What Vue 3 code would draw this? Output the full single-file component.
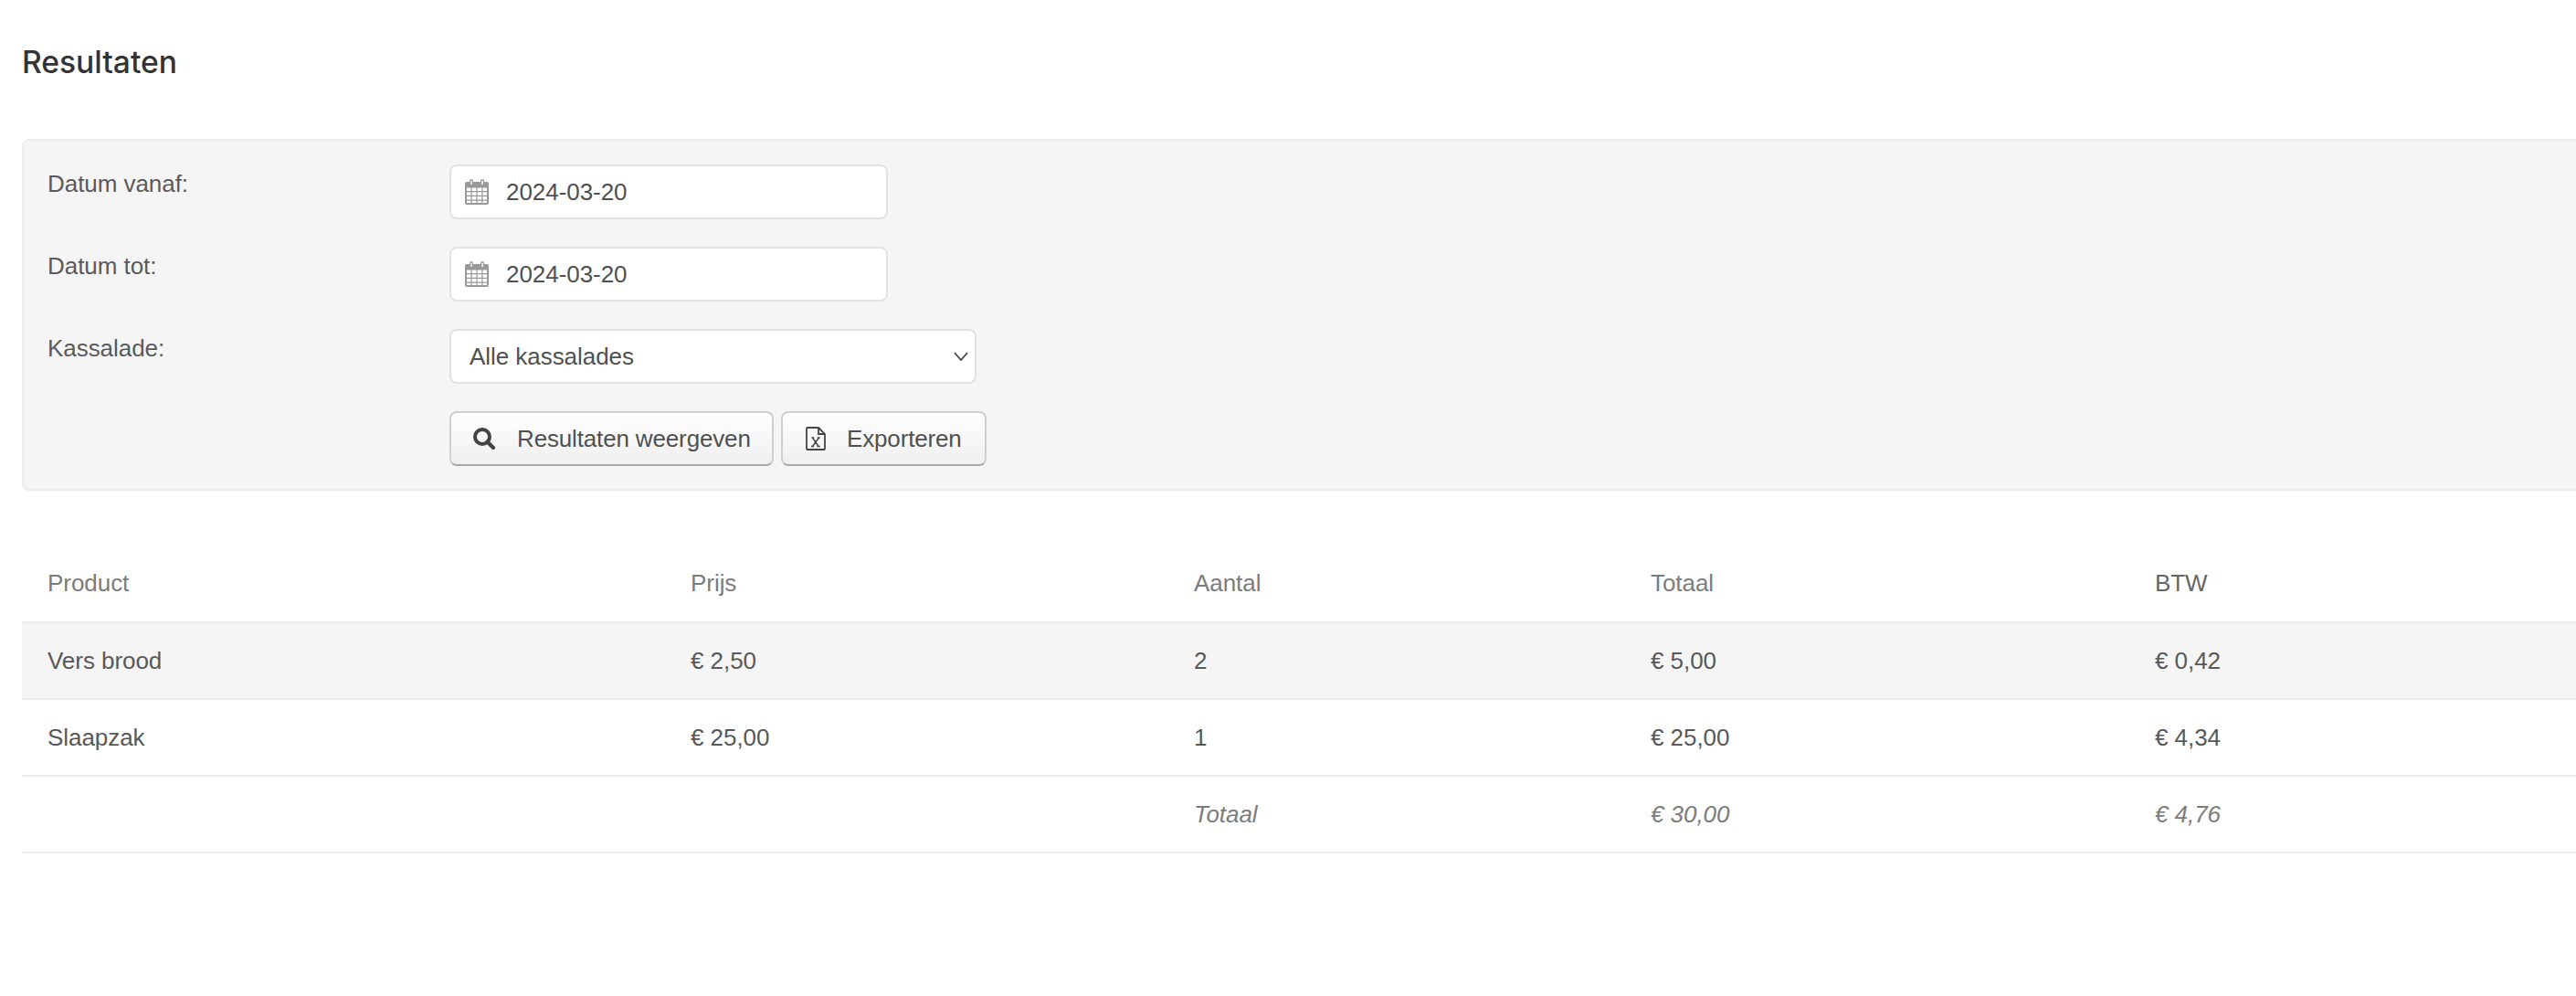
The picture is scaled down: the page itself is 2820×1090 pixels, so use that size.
<script setup>
const fields = [
  { id: 'from', label: 'Datum vanaf:', value: '2024-03-20' },
  { id: 'to', label: 'Datum tot:', value: '2024-03-20' },
]
const rows = [
  ['Vers brood', '€ 2,50', '2', '€ 5,00', '€ 0,42'],
  ['Slaapzak', '€ 25,00', '1', '€ 25,00', '€ 4,34'],
]
</script>

<template>
  <main class="page">
    <h1 class="title">Resultaten</h1>
    <form class="panel" @submit.prevent>
      <template v-for="f in fields" :key="f.id">
        <label class="label" :for="f.id">{{ f.label }}</label>
        <div class="date">
          <svg class="cal" viewBox="0 0 26 28">
            <path fill="#999" d="M2 3h3V2a2 2 0 0 1 4 0v1h8V2a2 2 0 0 1 4 0v1h3a2 2 0 0 1 2 2v21a2 2 0 0 1-2 2H2a2 2 0 0 1-2-2V5a2 2 0 0 1 2-2z"/>
            <path fill="#fff" d="M6.300 2.200a.7.7 0 0 1 1.400 0V6H6.300zM18.300 2.200a.7.7 0 0 1 1.400 0V6h-1.400z"/>
            <path fill="#fff" d="M2 9.500h4.500v3.500H2zM7.700 9.500h4.700v3.500H7.700zM13.600 9.500h4.700v3.500h-4.700zM19.500 9.500H24v3.500h-4.500zM2 14.300h4.500v3.500H2zM7.700 14.300h4.700v3.500H7.700zM13.600 14.300h4.700v3.500h-4.700zM19.500 14.300H24v3.500h-4.500zM2 19.100h4.500v3.500H2zM7.700 19.100h4.700v3.500H7.700zM13.600 19.100h4.700v3.500h-4.700zM19.500 19.100H24v3.500h-4.500zM2 23.800h4.500V26H2zM7.700 23.800h4.700V26H7.700zM13.600 23.800h4.700V26h-4.700zM19.500 23.800H24V26h-4.500z"/>
          </svg>
          <input :id="f.id" class="field date-input" type="text" :value="f.value" />
        </div>
      </template>

      <label class="label" for="drawer">Kassalade:</label>
      <div class="select-wrap">
        <select id="drawer" class="field select">
          <option>Alle kassalades</option>
        </select>
        <svg class="chev" viewBox="0 0 16 10"><path d="M1 1l7 8 7-8" fill="none" stroke="#444" stroke-width="1.800"/></svg>
      </div>

      <div class="actions">
        <button class="btn btn-search" type="button">
          <svg class="ico-search" viewBox="0 0 24 24">
            <circle cx="10" cy="10" r="8" fill="none" stroke="#444" stroke-width="4"/>
            <path d="M15.500 15.500L22 22" stroke="#444" stroke-width="4.200" stroke-linecap="round"/>
          </svg>
          <span class="btn-text">Resultaten weergeven</span>
        </button>
        <button class="btn btn-export" type="button">
          <svg class="ico-file" viewBox="0 0 22 26">
            <path d="M1 2a1 1 0 0 1 1-1h12l7 7v16a1 1 0 0 1-1 1H2a1 1 0 0 1-1-1z" fill="none" stroke="#444" stroke-width="1.800"/>
            <path d="M14 1v7h7" fill="none" stroke="#444" stroke-width="1.800"/>
            <path d="M6.500 12h2.800M12.800 12h2.800M7.500 12l6.500 9.500M14.500 12L7.500 21.500M6 21.500h3M12.500 21.500h3.300" fill="none" stroke="#444" stroke-width="1.400"/>
          </svg>
          <span class="btn-text">Exporteren</span>
        </button>
      </div>
    </form>

    <table class="table">
      <colgroup>
        <col class="c1" /><col class="c2" /><col class="c3" /><col class="c4" /><col />
      </colgroup>
      <thead>
        <tr>
          <th>Product</th><th>Prijs</th><th>Aantal</th><th>Totaal</th><th class="btw">BTW</th>
        </tr>
      </thead>
      <tbody>
        <tr v-for="(r, i) in rows" :key="i">
          <td v-for="(c, j) in r" :key="j">{{ c }}</td>
        </tr>
      </tbody>
      <tfoot>
        <tr>
          <td></td><td></td><td>Totaal</td><td>€ 30,00</td><td>€ 4,76</td>
        </tr>
      </tfoot>
    </table>
  </main>
</template>

<style>
html, body { margin: 0; background: #fff; }
</style>

<style scoped>
.page {
  width: 2820px;
  height: 1090px;
  box-sizing: border-box;
  padding: 0 0 0 24px;
  overflow: hidden;
  font-family: "Liberation Sans", Arial, sans-serif;
  font-size: 26px;
  letter-spacing: -0.05px;
  color: #585858;
}
.title {
  margin: 0;
  padding-top: 48px;
  height: 152px;
  box-sizing: border-box;
  font-family: Inter, "Liberation Sans", sans-serif;
  font-size: 33.600px;
  line-height: 40px;
  font-weight: 500;
  letter-spacing: 0;
  color: #333;
}
.panel {
  display: grid;
  grid-template-columns: 440px 1fr;
  grid-auto-rows: 60px;
  row-gap: 30px;
  height: 385px;
  box-sizing: border-box;
  padding: 26px 0 0 26px;
  background: #f5f5f5;
  border: 2px solid #ededed;
  border-right: 0;
  border-radius: 8px 0 0 8px;
}
.label { line-height: 42px; color: #5a5a5a; }
.date, .select-wrap { position: relative; }
.field {
  display: block;
  height: 60px;
  box-sizing: border-box;
  background: #fff;
  border: 2px solid #e2e2e2;
  border-radius: 8px;
  font: inherit;
  letter-spacing: inherit;
  color: #505050;
  outline: none;
}
.date-input { width: 480px; padding: 0 0 0 60px; }
.cal { position: absolute; left: 17px; top: 16px; width: 26px; height: 28px; }
.select { width: 577px; padding: 0 0 0 20px; appearance: none; }
.chev { position: absolute; left: 552px; top: 25px; width: 16px; height: 10px; }
.actions { grid-column: 2; display: flex; gap: 8px; }
.btn {
  display: flex;
  align-items: center;
  height: 60px;
  box-sizing: border-box;
  padding: 0;
  background: linear-gradient(#ffffff, #efefef);
  border: 2px solid #cfcfcf;
  border-bottom-color: #aaa;
  border-radius: 8px;
  font: inherit;
  color: #505050;
}
.btn-text { letter-spacing: -0.15px; }
.btn-search { width: 355px; padding-left: 24px; }
.btn-export { width: 225px; padding-left: 25px; }
.ico-search { width: 24px; height: 24px; margin-right: 24px; }
.ico-file { width: 22px; height: 26px; margin-right: 23px; }
.table {
  width: 2796px;
  margin-top: 59px;
  table-layout: fixed;
  border-collapse: separate;
  border-spacing: 0;
}
.c1 { width: 704px; }
.c2 { width: 551px; }
.c3 { width: 500px; }
.c4 { width: 552px; }
th, td {
  height: 82px;
  padding: 0 0 0 28px;
  text-align: left;
  font-weight: 400;
  border-bottom: 2px solid #ededed;
}
th { height: 84px; color: #7c7c7c; }
th.btw { color: #666; }
tbody tr:first-child td { background: #f5f5f5; }
tfoot td { font-style: italic; color: #7c7c7c; }
</style>
